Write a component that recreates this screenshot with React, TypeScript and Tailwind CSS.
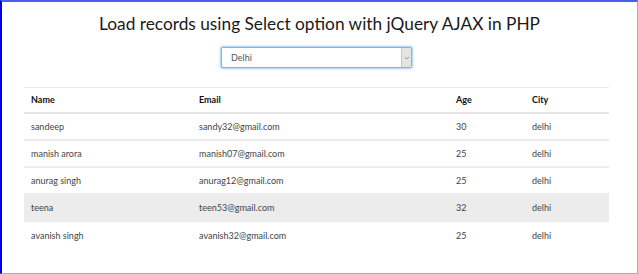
import React from "react";

const rows = [
  { name: "sandeep", email: "sandy32@gmail.com", age: "30", city: "delhi", hl: false },
  { name: "manish arora", email: "manish07@gmail.com", age: "25", city: "delhi", hl: false },
  { name: "anurag singh", email: "anurag12@gmail.com", age: "25", city: "delhi", hl: false },
  { name: "teena", email: "teen53@gmail.com", age: "32", city: "delhi", hl: true },
  { name: "avanish singh", email: "avanish32@gmail.com", age: "25", city: "delhi", hl: false },
];

export default function App() {
  return (
    <div
      className="w-[638px] h-[274px] bg-white border-l-2 border-t-2 border-r border-b border-l-[#0000e6] border-t-[#4a5ee8] border-r-[#a8a8e0] border-b-[#a8a8e0] overflow-hidden"
      style={{ fontFamily: 'Lato, "Noto Sans", sans-serif' }}
    >
      <div className="flex flex-col items-center">
        <h1 className="mt-[9px] text-[17.3px] leading-[26px] text-[#1a1a1a]">
          Load records using Select option with jQuery AJAX in PHP
        </h1>
        <div className="mt-[10px] mr-[6px] w-[191px] h-[21px] rounded-[2px] border border-[#7fb4ee] shadow-[0_0_2px_1px_rgba(102,175,233,0.6)] flex items-center bg-white">
          <span className="flex-1 pl-[9px] text-[9px] text-[#555]">Delhi</span>
          <div className="w-[10px] h-[19px] bg-[#e4e4e4] border-l border-[#c8c8c8] flex items-center justify-center">
            <svg width="6" height="4" viewBox="0 0 6 4">
              <path d="M1 1 L3 3 L5 1" stroke="#888" strokeWidth="0.8" fill="none" />
            </svg>
          </div>
        </div>
      </div>
      <div className="mt-[19px] ml-[22px] w-[585px] border-t border-[#e8e8e8]">
        <div className="grid grid-cols-[175px_257px_76px_77px] h-[26px] items-center border-b-2 border-[#e6e6e6] text-[9px] font-bold text-[#111]">
          <div className="pl-[7px]">Name</div>
          <div>Email</div>
          <div>Age</div>
          <div>City</div>
        </div>
        {rows.map((r, i) => (
          <div
            key={i}
            className={
              "grid grid-cols-[175px_257px_76px_77px] h-[27px] items-center text-[9px] text-[#444] " +
              (i < rows.length - 1 ? "border-b-2 border-[#ececec] " : "") +
              (r.hl ? "bg-[#ececec]" : "")
            }
          >
            <div className="pl-[7px]">{r.name}</div>
            <div>{r.email}</div>
            <div>{r.age}</div>
            <div>{r.city}</div>
          </div>
        ))}
      </div>
    </div>
  );
}
